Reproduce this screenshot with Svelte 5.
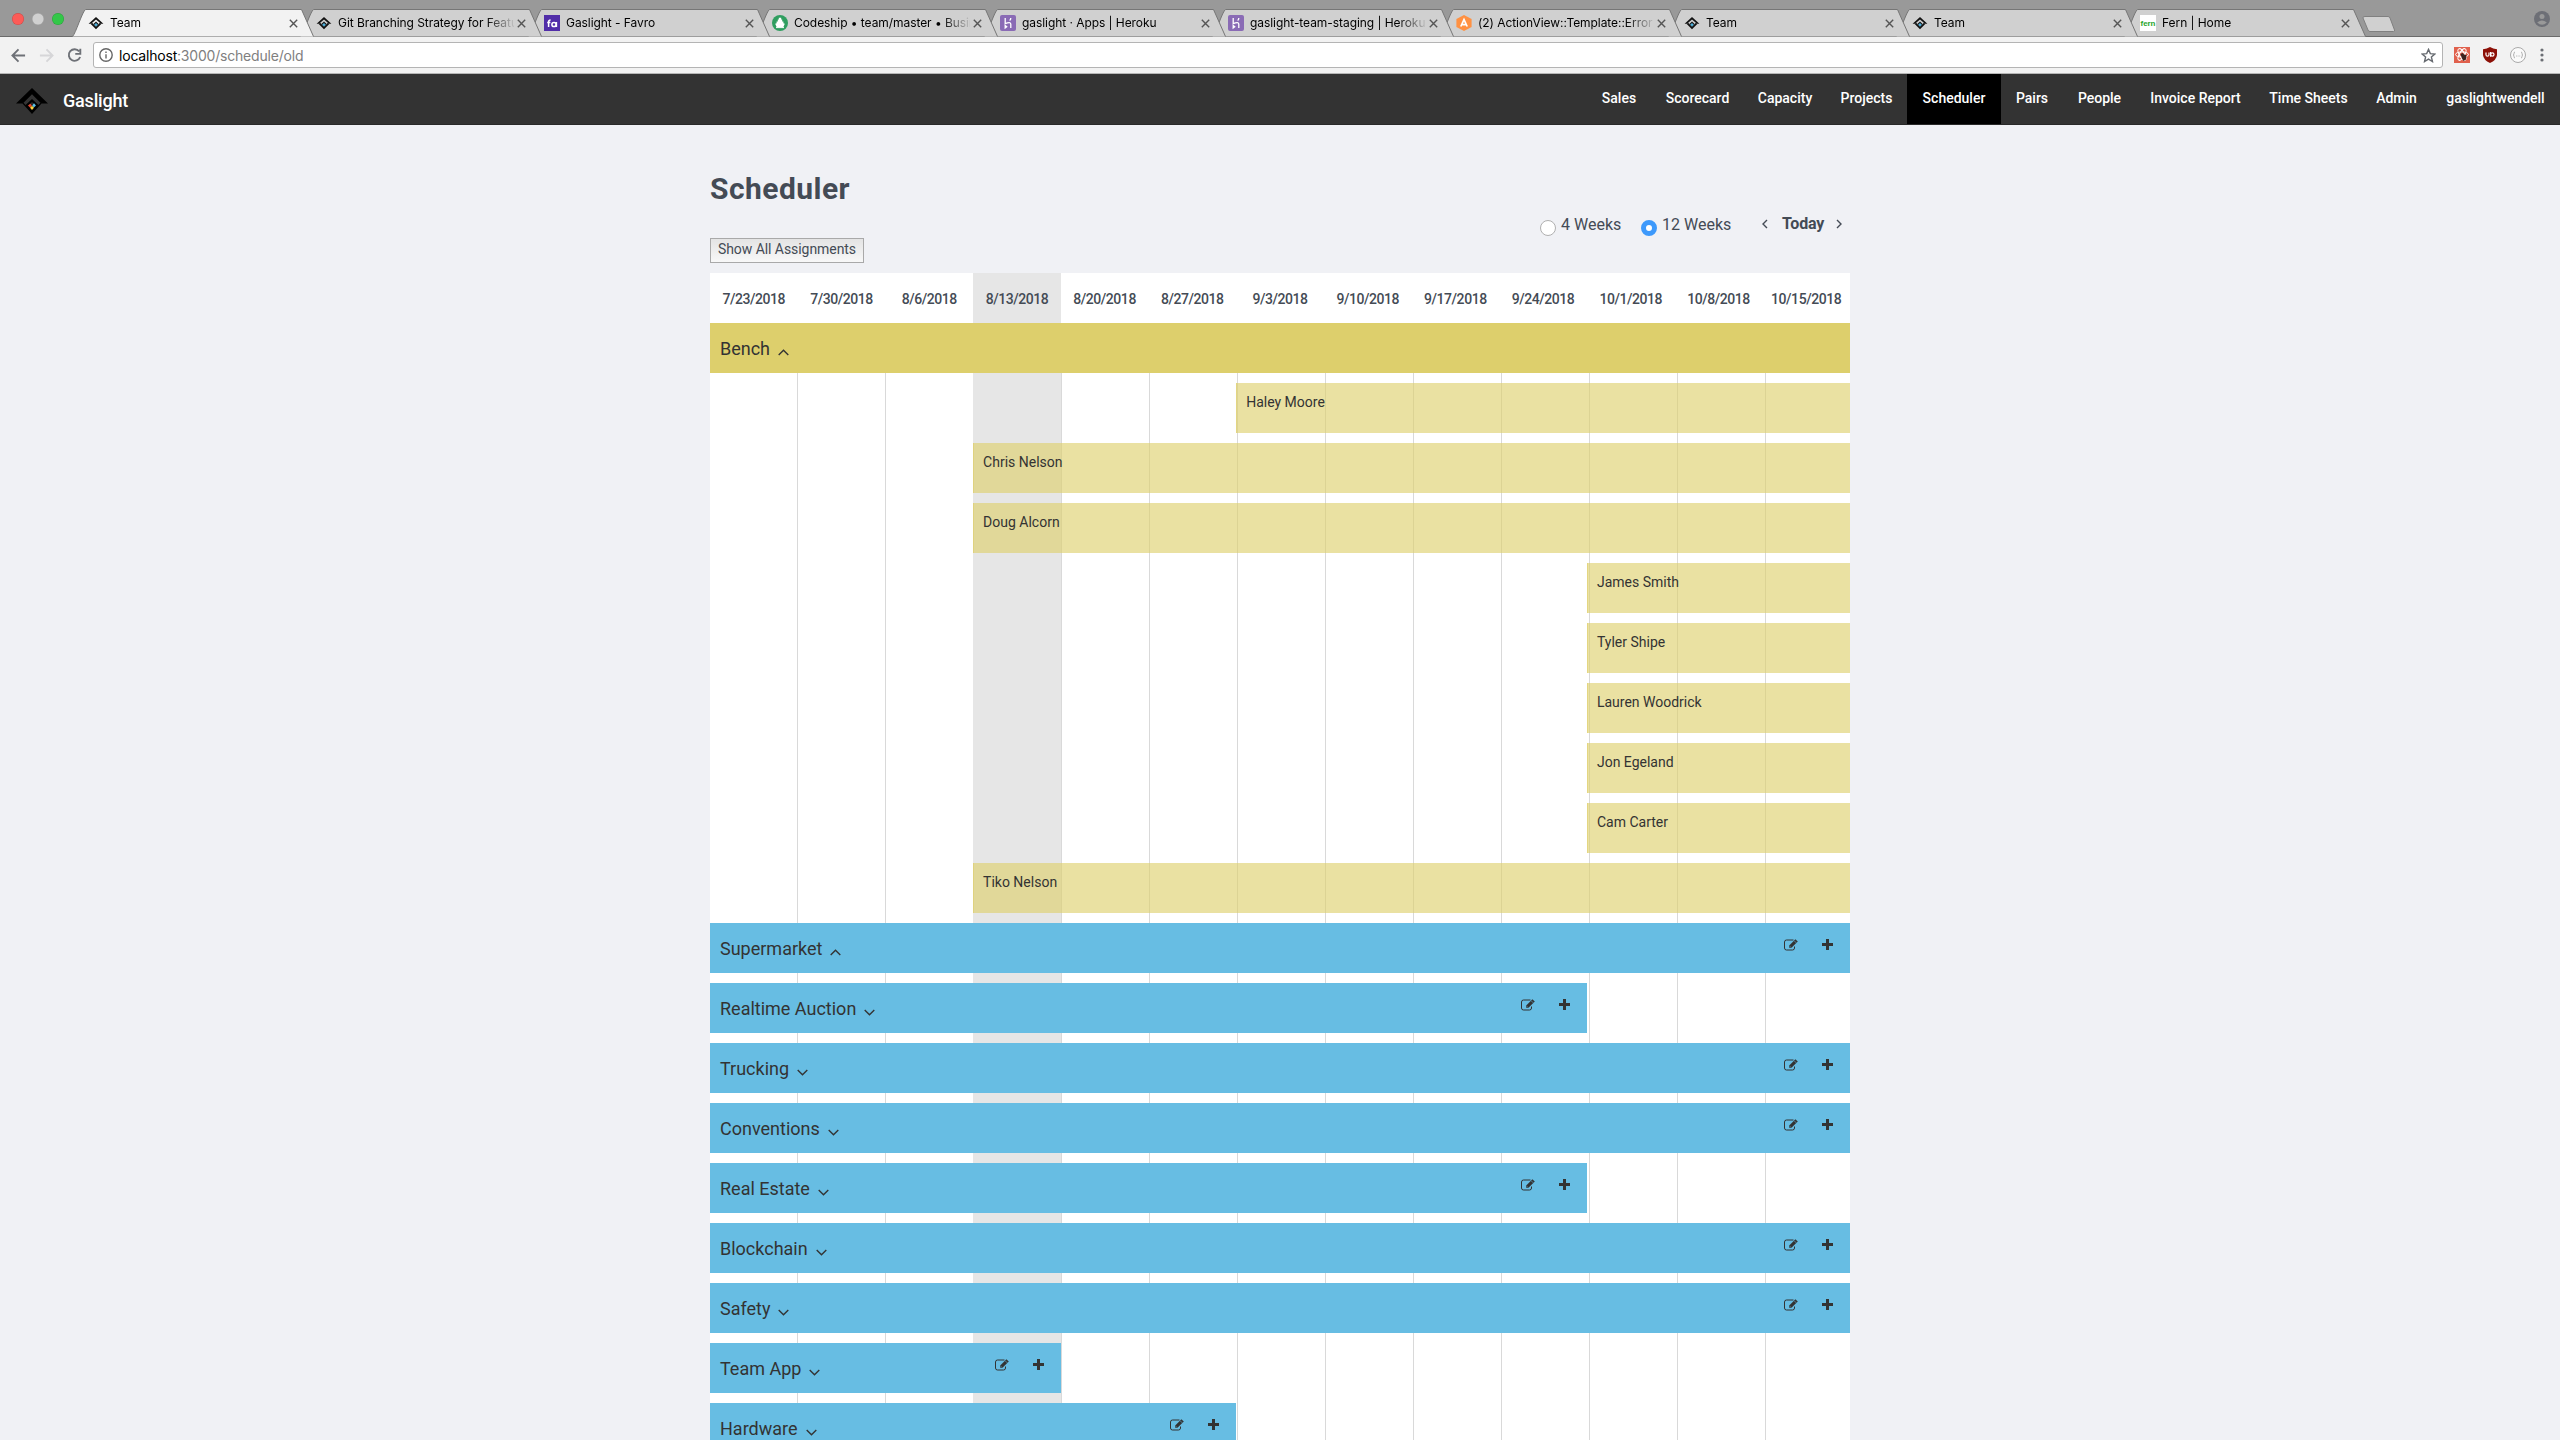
<script>
  const tabs = [
    { title: 'Team', icon: 'team', active: true },
    { title: 'Git Branching Strategy for Feature', icon: 'team' },
    { title: 'Gaslight - Favro', icon: 'favro' },
    { title: 'Codeship • team/master • Business', icon: 'codeship' },
    { title: 'gaslight · Apps | Heroku', icon: 'heroku' },
    { title: 'gaslight-team-staging | Heroku', icon: 'heroku' },
    { title: '(2) ActionView::Template::Error', icon: 'airbrake' },
    { title: 'Team', icon: 'team' },
    { title: 'Team', icon: 'team' },
    { title: 'Fern | Home', icon: 'fern' }
  ];
  const links = ['Sales', 'Scorecard', 'Capacity', 'Projects', 'Scheduler', 'Pairs', 'People', 'Invoice Report', 'Time Sheets', 'Admin', 'gaslightwendell'];
  const weeks = ['7/23/2018', '7/30/2018', '8/6/2018', '8/13/2018', '8/20/2018', '8/27/2018', '9/3/2018', '9/10/2018', '9/17/2018', '9/24/2018', '10/1/2018', '10/8/2018', '10/15/2018'];
  const currentWeek = 3;
  const bench = [
    { name: 'Haley Moore', start: 6 },
    { name: 'Chris Nelson', start: 3 },
    { name: 'Doug Alcorn', start: 3 },
    { name: 'James Smith', start: 10 },
    { name: 'Tyler Shipe', start: 10 },
    { name: 'Lauren Woodrick', start: 10 },
    { name: 'Jon Egeland', start: 10 },
    { name: 'Cam Carter', start: 10 },
    { name: 'Tiko Nelson', start: 3 }
  ];
  const projects = [
    { name: 'Supermarket', span: 13, open: true },
    { name: 'Realtime Auction', span: 10 },
    { name: 'Trucking', span: 13 },
    { name: 'Conventions', span: 13 },
    { name: 'Real Estate', span: 10 },
    { name: 'Blockchain', span: 13 },
    { name: 'Safety', span: 13 },
    { name: 'Team App', span: 4 },
    { name: 'Hardware', span: 6 }
  ];
  const pct = (n) => `${(n / 13) * 100}%`;
</script>

{#snippet favicon(kind)}
  <svg class="favicon" viewBox="0 0 16 16">
    {#if kind === 'team'}
      <path d="M8 2 .6 8.800H3L8 4.600l5 4.200h2.400z" fill="#111" />
      <path d="M3.400 8.400 8 13l4.600-4.600" fill="none" stroke="#111" stroke-width="1.900" />
      <path d="M8 6.400 5.400 9 8 11.600 10.600 9z" fill="#111" />
      <path d="M8 8 6.200 9.800 8 11.600l1.800-1.800z" fill="#4fb4e0" />
    {:else if kind === 'favro'}
      <rect width="16" height="16" fill="#512da8" />
      <path d="M4.600 12V6.900q0-2 2-2M3.200 7.400h3.200" fill="none" stroke="#fff" stroke-width="1.500" />
      <circle cx="10" cy="9.500" r="2.100" fill="none" stroke="#fff" stroke-width="1.500" />
      <path d="M12.400 7v5" stroke="#fff" stroke-width="1.500" />
    {:else if kind === 'codeship'}
      <circle cx="8" cy="8" r="8" fill="#2f9e5f" />
      <path d="M6.800 2.800h2.400v1.600h1v2.200h1.200v1.600l1.400.6-1.400 3.200H4.600L3.200 8.800l1.400-.6V6.600h1.200V4.400h1z" fill="#fff" />
      <path d="M4 12.600h8" stroke="#fff" />
    {:else if kind === 'heroku'}
      <rect width="16" height="16" rx="2" fill="#8a6bb5" />
      <path d="M5.200 3v5.600q5.600-2.400 5.600.600V13M5.200 10.600V13l1.500-1.200zM10.800 3q0 1.600-1.200 2.600" fill="none" stroke="#fff" stroke-width="1.300" />
    {:else if kind === 'airbrake'}
      <path d="M8 0l7.600 4v8L8 16 .4 12V4z" fill="#ff9142" />
      <path d="M4.800 11.500 8 4.600l3.200 6.900M6 9.600h4" fill="none" stroke="#fff" stroke-width="1.700" />
    {:else}
      <rect width="16" height="16" fill="#fff" />
      <text x="8" y="10.500" text-anchor="middle" class="fern" textLength="15">fern</text>
    {/if}
  </svg>
{/snippet}

{#snippet chevron(open)}
  <svg class="chevron" viewBox="0 0 11 7">
    <path d={open ? 'M.7 6 5.500 1.300 10.300 6' : 'M.7 1 5.500 5.700 10.300 1'} />
  </svg>
{/snippet}

<div class="window">
  <div class="tabstrip">
    <div class="lights"><i class="red"></i><i class="grey"></i><i class="green"></i></div>
    {#each tabs as tab, i}
      <div class="tab" class:active={tab.active} style:z-index={tab.active ? 20 : 12 - i}>
        <svg class="shape" viewBox="0 0 242 28">
          <path d="M.5 27.500C3.500 25 10.500 2 13.500.5H229.500L241.500 27.500" />
        </svg>
        {@render favicon(tab.icon)}
        <span class="title">{tab.title}</span>
        <svg class="close" viewBox="0 0 9 9"><path d="M.8.8l7.400 7.400M8.200.8.8 8.200" /></svg>
      </div>
    {/each}
    <svg class="newtab" viewBox="0 0 34 17"><path d="M3 .5H26q1.500 0 2 1.500L32.500 14q.5 1.500-1 1.500H8q-1.500 0-2-1.500L1 2Q.5.500 3 .5z" /></svg>
    <svg class="user" viewBox="0 0 16 16">
      <circle cx="8" cy="8" r="8" fill="#6d6f76" />
      <circle cx="8" cy="5.400" r="2.500" fill="#999" />
      <path d="M3.200 11.400Q8 7.400 12.800 11.400 8 16 3.200 11.400z" fill="#999" />
    </svg>
  </div>

  <div class="toolbar">
    <svg class="nav-icon back" viewBox="0 0 16 16"><path d="M15 8H2M8 1.500 1.500 8 8 14.500" /></svg>
    <svg class="nav-icon forward" viewBox="0 0 16 16"><path d="M1 8h13M8 1.500 14.500 8 8 14.500" /></svg>
    <svg class="nav-icon reload" viewBox="0 0 16 16"><path d="M13 3.600A6.200 6.200 0 1 0 14 9.600M14.200.8v5.400H8.800" /></svg>
    <div class="omnibox">
      <svg class="info" viewBox="0 0 14 14"><circle cx="7" cy="7" r="6.200" /><path d="M7 6.200v4.300M7 3.400v1.600" /></svg>
      <span class="url"><b>localhost</b>:3000/schedule/old</span>
      <svg class="star" viewBox="0 0 14 14"><path d="M7 1.300 8.700 5.200 12.900 5.600 9.700 8.400 10.700 12.600 7 10.400 3.300 12.600 4.300 8.400 1.100 5.600 5.300 5.200z" /></svg>
    </div>
    <div class="extensions">
      <svg class="ext" viewBox="0 0 16 16">
        <rect width="16" height="16" fill="#e0604c" />
        <g fill="none" stroke="#fff"><ellipse cx="8" cy="7.500" rx="6.500" ry="2.600" /><ellipse cx="8" cy="7.500" rx="6.500" ry="2.600" transform="rotate(60 8 7.500)" /><ellipse cx="8" cy="7.500" rx="6.500" ry="2.600" transform="rotate(120 8 7.500)" /></g>
        <path d="M6.500 7l2-1 1.500 1.500 2.500.500-.5 4.500-2.500 1.500-1.500-2.500z" fill="#3a2320" />
      </svg>
      <svg class="ext" viewBox="0 0 16 16">
        <path d="M8 0Q11 2 15 2.200V8Q14.500 13 8 16 1.500 13 1 8V2.200Q5 2 8 0z" fill="#8c1007" />
        <path d="M4 5.500v2.200q0 1.500 1.500 1.500T7 7.700V5.500M8.600 5v4.700" fill="none" stroke="#fff" stroke-width="1.200" />
        <circle cx="10.300" cy="7.500" r="1.700" fill="none" stroke="#fff" stroke-width="1.200" />
      </svg>
      <svg class="ext" viewBox="0 0 16 16">
        <circle cx="8" cy="8" r="7.500" fill="#fafafa" stroke="#aaa" />
        <path d="M5 5Q4 5 4 6.500 4 8 3.200 8 4 8 4 9.500 4 11 5 11M11 5q1 0 1 1.500Q12 8 12.800 8 12 8 12 9.500q0 1.500-1 1.500M6 9h.8M7.700 9h.8M9.400 9h.8" fill="none" stroke="#999" stroke-width=".8" />
      </svg>
      <svg class="menu" viewBox="0 0 4 14"><circle cx="2" cy="2" r="1.600" /><circle cx="2" cy="7" r="1.600" /><circle cx="2" cy="12" r="1.600" /></svg>
    </div>
  </div>

  <header class="navbar">
    <svg class="logo" viewBox="0 0 32 26">
      <path d="M16 0 0 15.500h6.500L16 26l9.500-10.500H32z" fill="#000" />
      <path d="M16 6.300 7.500 14.800 9.600 17 16 11l6.400 6 2.100-2.200z" fill="#333" />
      <path d="M16 14 12.200 17.600l1.200 1.200L16 16.200l2.600 2.600 1.200-1.200z" fill="#2b2b2b" />
      <path d="M14.300 15.800 16 17.600 14 19.600l-2-2z" fill="#e8452c" />
      <path d="M18 15.300l1.900 2.100-2 2.200-1.700-2z" fill="#59bfe8" />
      <path d="M16 17.800l2 2-2 2.100-2-2.100z" fill="#fbd13c" />
    </svg>
    <span class="brand">Gaslight</span>
    <nav>
      {#each links as link}
        <a class="link" class:current={link === 'Scheduler'} href="#{link}"><span>{link}</span></a>
      {/each}
    </nav>
  </header>

  <main>
    <h1>Scheduler</h1>
    <div class="controls">
      <button class="show">Show All Assignments</button>
      <div class="range">
        <label class="radio"><i></i><span>4 Weeks</span></label>
        <label class="radio twelve"><i class="on"></i><span>12 Weeks</span></label>
        <svg class="arrow" viewBox="0 0 6 10"><path d="M5 1 1 5l4 4" /></svg>
        <b class="today">Today</b>
        <svg class="arrow" viewBox="0 0 6 10"><path d="M1 1l4 4-4 4" /></svg>
      </div>
    </div>

    <section class="schedule">
      <div class="weeks">
        {#each weeks as week, i}
          <div class="week" class:now={i === currentWeek}><span>{week}</span></div>
        {/each}
      </div>
      <div class="board">
        <div class="columns">
          {#each weeks as _, i}<div class="column" class:now={i === currentWeek}></div>{/each}
        </div>
        <div class="rows">
          <div class="bar bench-head"><span class="name">Bench</span>{@render chevron(true)}</div>
          {#each bench as person}
            <div class="bar person" style:margin-left={pct(person.start)}><span class="label">{person.name}</span></div>
          {/each}
          {#each projects as project}
            <div class="bar project" style:width={pct(project.span)}>
              <span class="name">{project.name}</span>{@render chevron(project.open)}
              <div class="actions">
                <svg class="edit" viewBox="0 0 14 12">
                  <path d="M9.500 1H2.500Q.5 1 .5 3v6q0 2 2 2h6q2 0 2-2V7.500" fill="none" stroke="#333" stroke-width="1" />
                  <path d="M5.200 6.400 11.400.3 13.800 2.600 7.500 8.800H5.200z" fill="#333" />
                  <path d="M6 7.300l.9.900M10 1.600l2.300 2.300" stroke="#67bde3" stroke-width=".6" />
                </svg>
                <svg class="plus" viewBox="0 0 11 11"><path d="M4 0h3v4h4v3H7v4H4V7H0V4h4z" /></svg>
              </div>
            </div>
          {/each}
        </div>
      </div>
    </section>
  </main>
</div>

<style>
  :global(body) { background: #f0f1f5; overflow: hidden; }
  .window { height: 1440px; overflow: hidden; font-family: Roboto, "Liberation Sans", sans-serif; color: #444b55; }
  svg { display: block; flex: none; }

  .tabstrip { display: flex; height: 37px; box-sizing: border-box; padding-top: 9px; background: #999; box-shadow: inset 0 -1px #6b6b6b; font-family: Inter, "Liberation Sans", sans-serif; }
  .lights { display: flex; gap: 8px; width: 60px; padding: 4px 0 0 12px; }
  .lights i { width: 12px; height: 12px; border-radius: 50%; box-shadow: inset 0 0 0 .5px rgba(0, 0, 0, .2); }
  .red { background: #fc5b57; }
  .grey { background: #d0d0d0; }
  .green { background: #33c748; }
  .tab { position: relative; display: flex; align-items: center; width: 228px; height: 28px; box-sizing: border-box; padding: 0 0 0 16px; flex: none; }
  .shape { position: absolute; left: 0; top: 0; width: 242px; height: 28px; }
  .shape path { fill: #d0d0d0; stroke: #767676; }
  .active .shape path { fill: #f2f2f2; }
  .favicon { position: relative; width: 16px; height: 16px; }
  .fern { font: bold 8px "Liberation Sans", sans-serif; fill: #27a52c; }
  .title { position: relative; width: 176px; margin-left: 6px; overflow: hidden; white-space: nowrap; font-size: 12px; line-height: 16px; letter-spacing: -.06px; color: #000; -webkit-mask-image: linear-gradient(90deg, #000 148px, transparent 178px); mask-image: linear-gradient(90deg, #000 148px, transparent 178px); }
  .close { position: relative; width: 9px; height: 9px; margin-left: 3px; }
  .close path { stroke: #555; stroke-width: 1.4; fill: none; }
  .newtab { width: 34px; height: 17px; margin: 7px 0 0 10px; }
  .newtab path { fill: #d0d0d0; stroke: #808080; }
  .user { width: 16px; height: 16px; margin: 2px 10px 0 auto; }

  .toolbar { display: flex; align-items: center; height: 37px; box-sizing: border-box; padding: 0 16px 0 11px; background: #f2f2f2; border-bottom: 1px solid #b6b6b6; font-family: Inter, "Liberation Sans", sans-serif; }
  .nav-icon { width: 15px; height: 15px; margin-right: 13px; fill: none; stroke: #6e7177; stroke-width: 2; }
  .forward { stroke: #d6d6d8; }
  .reload { margin-right: 11px; }
  .omnibox { display: flex; align-items: center; flex: 1; height: 26px; box-sizing: border-box; border: 1px solid #b4b4b4; border-radius: 3px; background: #fff; padding: 0 6px 0 5px; }
  .info { width: 14px; height: 14px; fill: none; stroke: #666; stroke-width: 1.4; }
  .url { margin-left: 6px; font-size: 14px; letter-spacing: -.2px; color: #808080; flex: 1; }
  .url b { font-weight: 400; color: #000; }
  .star { width: 15px; height: 15px; fill: none; stroke: #666a70; stroke-width: 1.3; }
  .extensions { display: flex; align-items: center; gap: 12px; margin-left: 11px; }
  .ext { width: 16px; height: 16px; }
  .menu { width: 4px; height: 14px; margin-left: 2px; fill: #6b6e74; }

  .navbar { display: flex; height: 51px; box-sizing: border-box; border-bottom: 1px solid #292929; background: #333; padding-left: 16px; color: #fff; }
  .logo { width: 32px; height: 26px; margin-top: 14px; }
  .brand { margin: 15px 0 0 15px; font-size: 18px; line-height: 24px; font-weight: 500; letter-spacing: -.2px; }
  nav { display: grid; grid-template-columns: 64px 93px 82px 81px 94px 62px 73px 119px 107px 69px 129px; margin-left: auto; }
  .link { display: flex; justify-content: center; color: #fff; text-decoration: none; font-size: 14px; line-height: 20px; font-weight: 500; padding-top: 14px; }
  .current { background: #000; }

  main { width: 1140px; margin: 0 auto; }
  h1 { margin: 0; padding-top: 44px; font-size: 30px; line-height: 40px; font-weight: 700; height: 39px; letter-spacing: .45px; }
  .controls { display: flex; justify-content: space-between; height: 65px; }
  .show { width: 154px; height: 25px; margin: 30px 0 0; padding: 0 0 3px; border: 1px solid #a9a9a9; background: linear-gradient(#e4e4e4, #f8f8f8); font: 14px/18px Roboto, sans-serif; letter-spacing: -.06px; color: #444b55; white-space: nowrap; }
  .range { display: flex; align-items: flex-start; padding: 6px 8px 0 0; font-size: 16px; line-height: 20px; }
  .radio { display: flex; width: 101px; }
  .radio span { padding-top: 1px; }
  .radio.twelve { width: 121px; }
  .radio i { width: 16px; height: 16px; margin: 6px 5px 0 0; box-sizing: border-box; border: 1px solid #b0b0b0; border-radius: 50%; background: #fff; flex: none; }
  .radio i.on { border: 5px solid #3d99fb; }
  .arrow { width: 6px; height: 10px; margin-top: 5px; fill: none; stroke: #444b55; stroke-width: 1.4; }
  .today { width: 42px; margin: 0 12px 0 14px; letter-spacing: -.2px; }

  .weeks { display: grid; grid-template-columns: repeat(13, 1fr); height: 50px; background: #fff; }
  .week { display: flex; justify-content: center; font-size: 14px; line-height: 20px; font-weight: 500; padding-top: 16px; letter-spacing: -.45px; }
  .now { background: #e6e6e6; }
  .board { position: relative; background: #fff; }
  .columns { position: absolute; inset: 0; display: flex; overflow: hidden; }
  .column { width: 88px; box-sizing: border-box; border-right: 1px solid #d9d9d9; flex: none; }
  .column.now { box-shadow: -1px 0 #e6e6e6; }
  .rows { position: relative; display: flex; flex-direction: column; gap: 10px; }
  .bar { display: flex; height: 50px; box-sizing: border-box; padding-left: 10px; color: #333; flex: none; }
  .bench-head { background: #ddcf6c; }
  .person { padding-left: 9px; background: rgba(221, 207, 108, .63); border-left: 1px solid rgba(221, 207, 108, .6); }
  .project { background: #67bde3; }
  .name { font-size: 18px; line-height: 24px; padding-top: 14px; }
  .label { font-size: 14px; line-height: 20px; padding-top: 9px; }
  .chevron { width: 11px; height: 7px; margin: 26px 0 0 8px; fill: none; stroke: #333; stroke-width: 1.4; }
  .actions { display: flex; gap: 24px; margin: 16px 17px 0 auto; }
  .edit { width: 14px; height: 12px; }
  .plus { width: 11px; height: 11px; fill: #333; }
</style>
